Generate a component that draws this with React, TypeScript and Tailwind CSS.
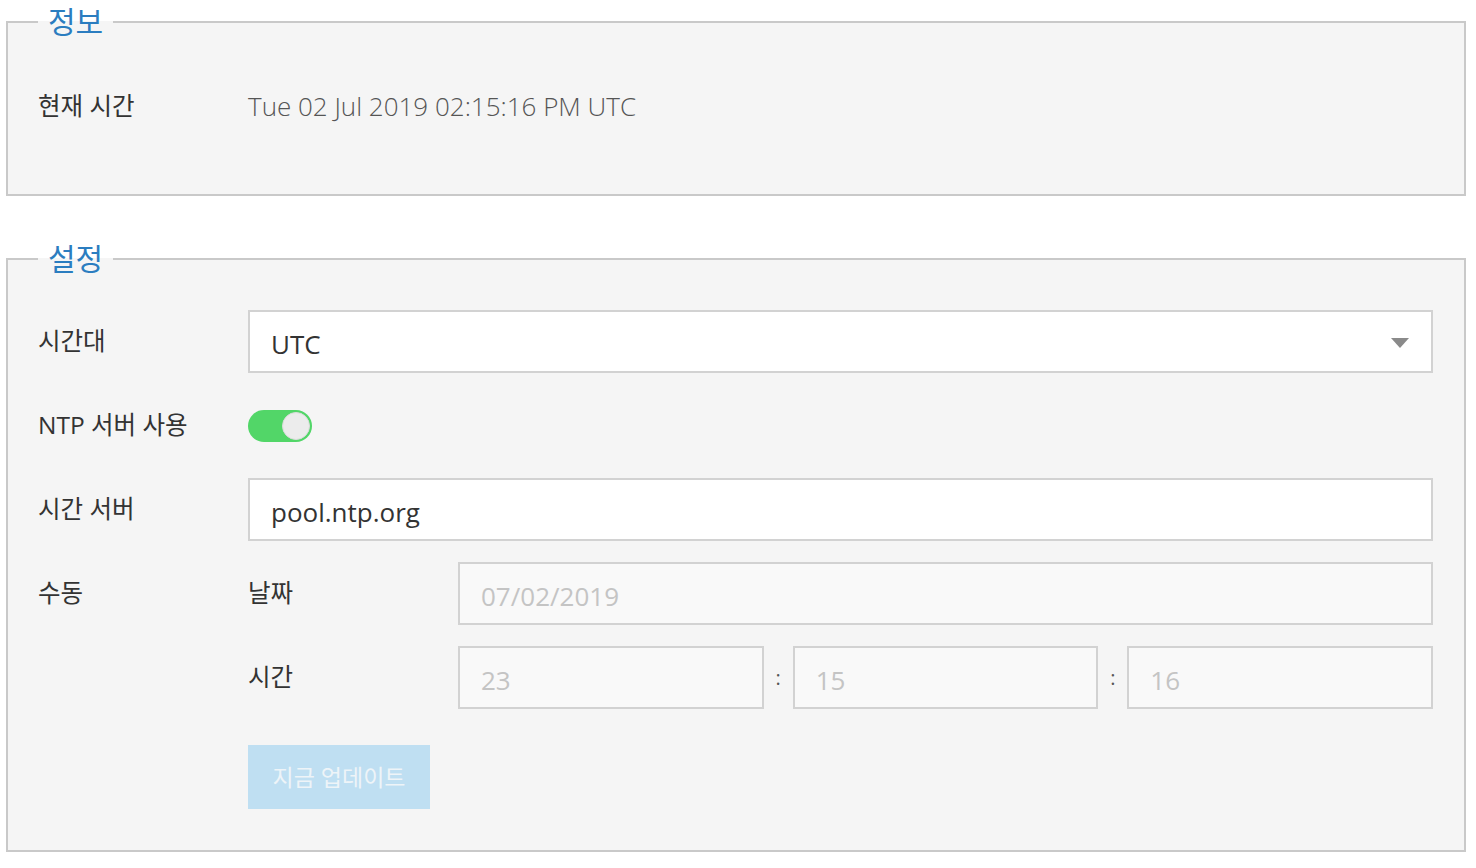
import React from 'react'

const font = { fontFamily: '"Open Sans", "Noto Sans CJK KR", sans-serif' }

function Row({ label, children, className = '' }: { label: string; children: React.ReactNode; className?: string }) {
  return (
    <div className={`flex items-center ${className}`}>
      <div className="w-[210px] shrink-0 text-[24.5px] text-[#333]">{label}</div>
      <div className="flex-1">{children}</div>
    </div>
  )
}

function TextBox({ value, disabled = false, className = '' }: { value: string; disabled?: boolean; className?: string }) {
  return (
    <div
      className={`h-[63px] flex items-center px-[21px] pt-[5px] border-2 border-[#d2d2d2] text-[26px] ${
        disabled ? 'bg-[#f9f9f9] text-[#c4c4c4]' : 'bg-white text-[#333]'
      } ${className}`}
    >
      {value}
    </div>
  )
}

export default function App() {
  return (
    <div className="min-h-screen bg-white pl-[6px] pr-[10px] pt-[7px]" style={font}>
      {/* 정보 */}
      <fieldset className="border-2 border-[#c9c9c9] bg-[#f5f5f5] pl-[30px] pr-[31px] pt-[38px] pb-[56px]">
        <legend className="px-[10px] text-[30px] leading-[30px] text-[#2b7dc0]">정보</legend>
        <Row label="현재 시간" className="h-[63px]">
          <span className="text-[26px] font-light text-[#555]">Tue 02 Jul 2019 02:15:16 PM UTC</span>
        </Row>
      </fieldset>

      {/* 설정 */}
      <fieldset className="mt-[48px] border-2 border-[#c9c9c9] bg-[#f5f5f5] pl-[30px] pr-[31px] pt-[36px] pb-[41px]">
        <legend className="px-[10px] text-[30px] leading-[30px] text-[#2b7dc0]">설정</legend>
        <div className="flex flex-col gap-[21px]">
          <Row label="시간대">
            <div className="relative h-[63px] flex items-center px-[21px] pt-[5px] border-2 border-[#d2d2d2] bg-white text-[26px] text-[#333]">
              UTC
              <svg className="absolute right-[22px] top-[26px]" width="18" height="10" viewBox="0 0 18 10">
                <path d="M0 0 L18 0 L9 10 Z" fill="#8a8a8a" />
              </svg>
            </div>
          </Row>
          <Row label="NTP 서버 사용" className="h-[63px]">
            <div className="relative w-[64px] h-[32px] rounded-full bg-[#52d668]">
              <div className="absolute right-[2px] top-[2px] w-[28px] h-[28px] rounded-full bg-[#ececec] border border-[#dcdcdc]" />
            </div>
          </Row>
          <Row label="시간 서버">
            <TextBox value="pool.ntp.org" />
          </Row>
          <Row label="수동">
            <div className="flex items-center">
              <div className="w-[210px] shrink-0 text-[24.5px] text-[#333]">날짜</div>
              <TextBox value="07/02/2019" disabled className="flex-1" />
            </div>
          </Row>
          <div className="flex items-center">
            <div className="w-[210px] shrink-0" />
            <div className="flex-1 flex items-center">
              <div className="w-[210px] shrink-0 text-[24.5px] text-[#333]">시간</div>
              <div className="flex-1 flex items-center">
                <TextBox value="23" disabled className="flex-1" />
                <span className="w-[29px] text-center text-[20px] text-[#555]">:</span>
                <TextBox value="15" disabled className="flex-1" />
                <span className="w-[29px] text-center text-[20px] text-[#555]">:</span>
                <TextBox value="16" disabled className="flex-1" />
              </div>
            </div>
          </div>
          <div className="flex mt-[15px]">
            <div className="w-[210px] shrink-0" />
            <button className="w-[182px] h-[64px] bg-[#bfdff2] text-[23px] text-[#eef4f8]">지금 업데이트</button>
          </div>
        </div>
      </fieldset>
    </div>
  )
}
